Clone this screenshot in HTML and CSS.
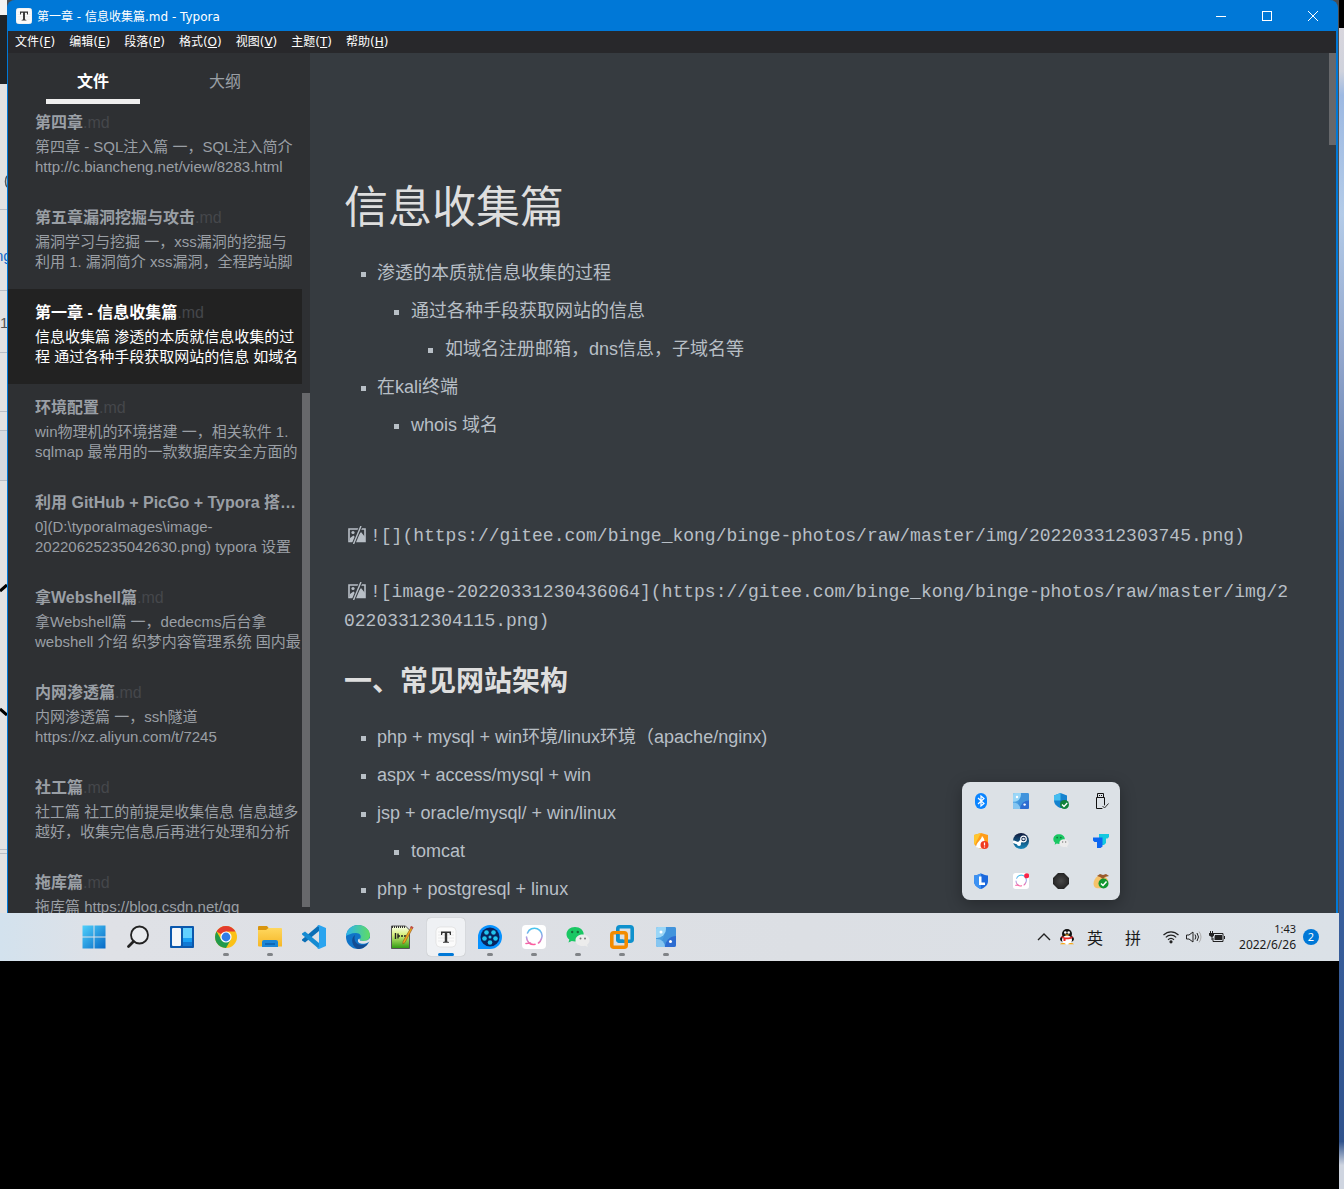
FILE: index.html
```html
<!DOCTYPE html>
<html lang="zh-CN">
<head>
<meta charset="utf-8">
<title>第一章 - 信息收集篇.md - Typora</title>
<link rel="stylesheet" href="styles.css">
</head>
<body>
<svg class="sprite" aria-hidden="true">
  <defs>
    <linearGradient id="win" x1="0" y1="0" x2="1" y2="1"><stop offset="0" stop-color="#4fd0fb"/><stop offset="1" stop-color="#0669c6"/></linearGradient>
    <linearGradient id="arc" x1="0" y1="0" x2="0" y2="1"><stop offset="0" stop-color="#45c5ee"/><stop offset=".55" stop-color="#a9a4e6"/><stop offset="1" stop-color="#ff5c9d"/></linearGradient>
    <linearGradient id="edge" x1="0" y1="0" x2="1" y2="0"><stop offset="0" stop-color="#2db3ee"/><stop offset="1" stop-color="#5fdc62"/></linearGradient>
    <linearGradient id="folder" x1="0" y1="0" x2="0" y2="1"><stop offset="0" stop-color="#ffd75e"/><stop offset="1" stop-color="#f5b727"/></linearGradient>
    <linearGradient id="green" x1="0" y1="0" x2="0" y2="1"><stop offset="0" stop-color="#fbfff0"/><stop offset=".4" stop-color="#d6f07a"/><stop offset="1" stop-color="#2c9a10"/></linearGradient>
    <linearGradient id="steam" x1="0" y1="0" x2="0" y2="1"><stop offset="0" stop-color="#10183a"/><stop offset="1" stop-color="#1689bd"/></linearGradient>
    <radialGradient id="dark"><stop offset="0" stop-color="#484848"/><stop offset="1" stop-color="#252525"/></radialGradient>
    <clipPath id="tile"><rect width="20" height="20" rx="2"/></clipPath>
  </defs>
  <symbol id="wechat" viewBox="0 0 24 24">
    <path d="M9 2C4 2 .5 5.2.5 9.200c0 2.200 1 4 2.800 5.300L2.500 17.500l3.200-1.600c1 .3 2.200.5 3.300.5 5 0 8.700-3.200 8.700-7.200S14 2 9 2z" fill="#19c763"/>
    <circle cx="6.200" cy="7" r="1.200" fill="#146c38"/><circle cx="11.800" cy="7" r="1.200" fill="#146c38"/>
    <path d="M16.500 9.500c-4 0-7 2.500-7 5.800s3 5.800 7 5.800c.9 0 1.800-.1 2.600-.4l2.700 1.300-.7-2.400c1.500-1.100 2.400-2.600 2.400-4.300 0-3.300-3-5.800-7-5.800z" fill="#ececec"/>
    <circle cx="14.500" cy="13.500" r="1" fill="#777"/><circle cx="19" cy="13.500" r="1" fill="#777"/>
  </symbol>
  <symbol id="swirl" viewBox="0 0 24 24">
    <rect width="24" height="24" rx="4" fill="#fff"/>
    <path d="M5.500 8A7.500 7.500 0 0 1 19.500 13.500Q18.500 16.500 16.500 18M4.500 12Q4.500 15 7 18Q10 20 13 19.200M4 18.500l4.500-.5" fill="none" stroke="url(#arc)" stroke-width="1.600" stroke-linecap="round"/>
  </symbol>
  <symbol id="gallery" viewBox="0 0 20 20">
    <g clip-path="url(#tile)">
      <rect width="20" height="20" fill="#4a9fe0"/>
      <path d="M10 0h10v9C14 9 10 12 9 20H5C5 12 10 9 10 0z" fill="#4294dc"/>
      <circle cx="1" cy="2" r="9" fill="#9ad6f7"/>
      <circle cx="1" cy="20" r="8" fill="#86c6f1"/>
      <circle cx="20" cy="20" r="11" fill="#2d6cd1"/>
      <circle cx="5" cy="5" r="1.500" fill="#fff"/><circle cx="14.500" cy="14.500" r="1.500" fill="#fff"/>
    </g>
  </symbol>
  <symbol id="typora" viewBox="0 0 24 24">
    <rect x="2" y="2" width="20" height="20" rx="4" fill="#fbfbfb" stroke="#d8d8d8" stroke-width=".6"/>
    <path d="M4 7h16M4 10h16M4 13h16M4 16h16" stroke="#e2e2e2" stroke-width=".7"/>
    <path d="M7 6.500h10v3.500h-1l-.6-2H13.200v8.500l1.800.4v.8H9v-.8l1.800-.4V8H8.600L8 10H7z" fill="#333"/>
  </symbol>
  <symbol id="broken" viewBox="0 0 18 18">
    <path d="M1 3h16v12.500H1z" fill="none" stroke="#b8bfc6" stroke-width="1.600"/>
    <circle cx="5" cy="6.500" r="1.600" fill="#b8bfc6"/>
    <path d="M2 15v-3l3.500-2.500L8 12l5-6 4 5v4z" fill="#b8bfc6"/>
    <path d="M13 0 5.500 18" stroke="#363b40" stroke-width="3.400"/>
    <path d="M13 0 5.500 18" stroke="#b8bfc6" stroke-width="1.400"/>
  </symbol>
</svg>

<div class="desktop">
  <div class="workspace">
    <svg class="page-behind" width="7" height="913" aria-hidden="true">
      <rect width="7" height="913" fill="#e2e2e3"/><rect width="7" height="15" fill="#f2f2f2"/><rect y="15" width="7" height="69" fill="#1f2327"/>
      <path d="M0 209.500h7M0 290.500h7M0 352.500h7M0 411.500h7M0 430.500h7M0 480.500h7M0 849.500h7M0 853.500h7" stroke="#b9bec6"/>
      <rect y="431" width="7" height="49" fill="#d7dae0"/>
      <path d="M0 591 7 585M0 709l7 6" stroke="#000" stroke-width="3"/>
      <path d="M7 176c-2 3-2 8 0 11" fill="none" stroke="#555" stroke-width="1.500"/>
      <text x="-5" y="261" class="behind-link">ng</text><text x="0" y="328" class="behind-num">1</text>
    </svg>

    <section class="window">
      <header class="titlebar">
        <svg class="app-icon" viewBox="2 2 20 20"><use href="#typora" width="24" height="24"/></svg>
        <span class="title">第一章 - 信息收集篇.md - Typora</span>
        <button class="caption" aria-label="最小化"><svg viewBox="0 0 10 10"><path d="M0 5.500h10"/></svg></button>
        <button class="caption" aria-label="最大化"><svg viewBox="0 0 10 10"><rect x=".5" y=".5" width="9" height="9"/></svg></button>
        <button class="caption" aria-label="关闭"><svg viewBox="0 0 10 10"><path d="M0 0l10 10M10 0 0 10"/></svg></button>
      </header>
      <nav class="menubar">
        <button>文件(<u>F</u>)</button><button>编辑(<u>E</u>)</button><button>段落(<u>P</u>)</button><button>格式(<u>O</u>)</button><button>视图(<u>V</u>)</button><button>主题(<u>T</u>)</button><button>帮助(<u>H</u>)</button>
      </nav>
      <div class="body">
        <aside class="sidebar">
          <div class="tabs"><button class="tab tab-on">文件</button><button class="tab">大纲</button></div>
          <ul class="files">
            <li><a class="file" href="#"><strong>第四章<span>.md</span></strong>第四章 - SQL注入篇 一，SQL注入简介<br>http://c.biancheng.net/view/8283.html</a></li>
            <li><a class="file" href="#"><strong>第五章漏洞挖掘与攻击<span>.md</span></strong>漏洞学习与挖掘 一，xss漏洞的挖掘与<br>利用 1. 漏洞简介 xss漏洞，全程跨站脚</a></li>
            <li><a class="file file-on" href="#"><strong>第一章 - 信息收集篇<span>.md</span></strong>信息收集篇 渗透的本质就信息收集的过<br>程 通过各种手段获取网站的信息 如域名</a></li>
            <li><a class="file" href="#"><strong>环境配置<span>.md</span></strong>win物理机的环境搭建 一，相关软件 1.<br>sqlmap 最常用的一款数据库安全方面的</a></li>
            <li><a class="file" href="#"><strong>利用 GitHub + PicGo + Typora 搭…</strong>0](D:\typoraImages\image-<br>20220625235042630.png) typora 设置</a></li>
            <li><a class="file" href="#"><strong>拿Webshell篇<span>.md</span></strong>拿Webshell篇 一，dedecms后台拿<br>webshell 介绍 织梦内容管理系统 国内最</a></li>
            <li><a class="file" href="#"><strong>内网渗透篇<span>.md</span></strong>内网渗透篇 一，ssh隧道<br>https://xz.aliyun.com/t/7245</a></li>
            <li><a class="file" href="#"><strong>社工篇<span>.md</span></strong>社工篇 社工的前提是收集信息 信息越多<br>越好，收集完信息后再进行处理和分析</a></li>
            <li><a class="file" href="#"><strong>拖库篇<span>.md</span></strong>拖库篇 https://blog.csdn.net/qq</a></li>
          </ul>
          <div class="side-scroll"></div>
        </aside>
        <main class="editor">
          <h1>信息收集篇</h1>
          <ul class="notes">
            <li>渗透的本质就信息收集的过程
              <ul><li>通过各种手段获取网站的信息
                <ul><li>如域名注册邮箱，dns信息，子域名等</li></ul></li></ul></li>
            <li>在kali终端
              <ul><li>whois 域名</li></ul></li>
          </ul>
          <div class="sources">
            <p><svg class="broken"><use href="#broken"/></svg>![](https://gitee.com/binge_kong/binge-photos/raw/master/img/202203312303745.png)</p>
            <p><svg class="broken"><use href="#broken"/></svg>![image-20220331230436064](https://gitee.com/binge_kong/binge-photos/raw/master/img/202203312304115.png)</p>
          </div>
          <h2>一、常见网站架构</h2>
          <ul class="notes">
            <li>php + mysql + win环境/linux环境（apache/nginx)</li>
            <li>aspx + access/mysql + win</li>
            <li>jsp + oracle/mysql/ + win/linux
              <ul><li>tomcat</li></ul></li>
            <li>php + postgresql + linux</li>
          </ul>
          <div class="editor-scroll"></div>
        </main>
      </div>
    </section>

    <div class="tray-popup">
      <svg viewBox="0 0 16 16"><rect x="2" width="12" height="16" rx="6" fill="#0a84ff"/><path d="M5 5l6 5.500-3 2.500V3l3 2.500L5 11" fill="none" stroke="#fff" stroke-width="1.200"/></svg>
      <svg viewBox="0 0 20 20"><use href="#gallery"/></svg>
      <svg viewBox="0 0 16 16"><path d="M7.500 0 14 2.500V7c0 4-2.500 6.500-6.500 8C3.500 13.500 1 11 1 7V2.500z" fill="#1583cf"/><path d="M7.500 0v7.500H1v-5z" fill="#45bdf0"/><path d="M7.500 7.500H14C13.500 11.500 11 14 7.500 15z" fill="#0d5ca8"/><circle cx="11.500" cy="11.500" r="4.500" fill="#12823b"/><path d="M9 11.500l2 2 3.200-3.500" fill="none" stroke="#fff" stroke-width="1.300"/></svg>
      <svg viewBox="0 0 16 16"><path d="M4.500.5h6v4h-6zM3.500 4.500h8v11h-8zM6 2.500h1M8 2.500h1" fill="none" stroke="#111"/><path d="M9 13l2 2 4.500-5" fill="none" stroke="#dce1e6" stroke-width="3"/><path d="M9.500 13l2 2 4-4.500" fill="none" stroke="#333"/></svg>
      <svg viewBox="0 0 16 16"><path d="M1 2l7-2 7 2v7c0 3-3 5-7 7-4-1.500-7-4-7-7z" fill="#ff9c18"/><path d="M1 2l7-2C6 4 4 7 2 12 1 11 1 9 1 9z" fill="#ffc62f"/><path d="M3 14c1-6 5-6 6-11 3 3 3 6 2 12-3 1-6 0-8-1z" fill="#fff"/><circle cx="11.500" cy="12" r="4" fill="#f03b20"/><path d="M11.500 9.500v3M11.500 13.500v1" stroke="#fff" stroke-width="1.200"/></svg>
      <svg viewBox="0 0 16 16"><circle cx="8" cy="8" r="8" fill="url(#steam)"/><path d="M0 8.500l5.500 2 3-3" stroke="#fff" stroke-width="2.600" fill="none"/><circle cx="10.500" cy="6" r="2.800" fill="#17294d" stroke="#fff" stroke-width="1.200"/><circle cx="10.500" cy="6" r="1.300" fill="#d8e4ef"/><circle cx="6" cy="11" r="2" fill="#fff"/></svg>
      <svg viewBox="0 0 24 24"><use href="#wechat"/></svg>
      <svg viewBox="0 0 16 16"><path d="M6 1h10v3l-1.500 1.500H13V10l-2 2H9V5H6z" fill="#14c8df"/><path d="M0 4.500h9.500v9L7.500 15H4V9H1.500L0 7.500z" fill="#0c66f1"/></svg>
      <svg viewBox="0 0 16 16"><path d="M1 2.500C4 2.500 6 1 8 .5c2 .5 4 2 7 2V8c0 4-3 6.500-7 8-4-1.500-7-4-7-8z" fill="#1c69dd"/><path d="M1 2.500C4 2.500 6 1 8 .5V16c-4-1.500-7-4-7-8z" fill="#3d92f2"/><path d="M6 3.500h2.500v6H12V12H6z" fill="#fff"/></svg>
      <svg viewBox="0 0 24 24"><use href="#swirl"/><circle cx="20.500" cy="4" r="3.800" fill="#fb2448"/></svg>
      <svg viewBox="0 0 16 16"><path d="M5 0h6l5 5v6l-5 5H5l-5-5V5z" fill="url(#dark)"/></svg>
      <svg viewBox="0 0 16 16"><path d="M5 3C0 6-1 13 3 15c4 1 10 0 12-4 1-4-1-6-4-8z" fill="#f6c36a"/><path d="M4 3l3-2 3 1 3-1 3 2-4 1-2 2-3-2z" fill="#9b5a2b"/><circle cx="10.500" cy="10.500" r="5" fill="#11962f"/><path d="M8 10.500l2 2 3.500-4" fill="none" stroke="#fff" stroke-width="1.500"/></svg>
    </div>
  </div>

  <footer class="taskbar">
    <div class="apps">
      <button aria-label="开始"><svg viewBox="0 0 24 24"><path fill="url(#win)" d="M.5.500h11v11H.5zM12.500.500h11v11h-11zM.5 12.500h11v11H.5zM12.500 12.500h11v11h-11z"/></svg></button>
      <button aria-label="搜索"><svg viewBox="0 0 24 24"><circle cx="13.500" cy="10" r="8.500" fill="#e9ebee" stroke="#222" stroke-width="1.800"/><path d="M7.500 16.500 2.500 21.500" stroke="#222" stroke-width="2.800" stroke-linecap="round"/></svg></button>
      <button aria-label="小组件"><svg viewBox="0 0 24 24"><rect y="1" width="24" height="22" rx="1" fill="#0b58ad"/><rect x="2" y="3" width="9" height="18" rx="1" fill="#f5f7f9"/><path d="M13 3h9v10h-9z" fill="#62d0ff"/><path d="M13 13h9v4h-9z" fill="#18a0f5"/><path d="M13 17h9v4h-9z" fill="#0f78d4"/></svg></button>
      <button class="running" aria-label="Chrome"><svg viewBox="0 0 24 24"><circle cx="12" cy="12" r="11" fill="#fbc116"/><path d="M12 12 2.500 6.500A11 11 0 0 1 21.500 6.500H12z" fill="#e33b2e"/><path d="M2.500 6.500A11 11 0 0 0 12 23l4.800-8.500L12 12l-4.800 2.500z" fill="#219a4c"/><circle cx="12" cy="12" r="5.600" fill="#fff"/><circle cx="12" cy="12" r="4.400" fill="#2f7de9"/></svg></button>
      <button class="running" aria-label="文件资源管理器"><svg viewBox="0 0 24 24"><path d="M0 2a1 1 0 0 1 1-1h8l2 2.500L9 6H0z" fill="#d9950d"/><path d="M0 5h8l2.500-2H23a1 1 0 0 1 1 1v17.500H1a1 1 0 0 1-1-1z" fill="url(#folder)"/><path d="M4 22v-5a2 2 0 0 1 2-2h12a2 2 0 0 1 2 2v5z" fill="#1a86d6"/><path d="M7 19h10" stroke="#0b5cad" stroke-width="1.500"/></svg></button>
      <button aria-label="Visual Studio Code"><svg viewBox="0 0 24 24"><path d="M17 0v6L3 17.500 0 15.500v-1z" fill="#0b6eb5"/><path d="M17 24v-6L3 6.500 0 8.500v1z" fill="#158bd2"/><path d="M17 0l7 3v18l-7 3-2-1 2-1V2l-2-1z" fill="#2aa4ef"/></svg></button>
      <button aria-label="Edge"><svg viewBox="0 0 24 24"><circle cx="12" cy="12" r="12" fill="#1074c8"/><path d="M0 11C1 4 6 0 12 0c7 0 12 5 12 10 0 4-3 6-6 6-3.500 0-4.500-1-4-2 2-3 0-6-4-6-5 0-8 2-10 3z" fill="url(#edge)"/><path d="M9 10c-2 6 2 10 7 10 3 0 5-1 6.500-2.500C20 22 16 24 12 24 6 22 4 13 9 10z" fill="#134c92"/><path d="M14 14c-1 1 0 2 4 2 2.500 0 4.500-1 6-3v3l-2 1.500c-4 2.500-11 1.500-10-2.500.5-1 1-1.500 2-1z" fill="#dfe3e7"/></svg></button>
      <button aria-label="Notepad++"><svg viewBox="0 0 24 24"><path d="M1.500 1h14l4 4v18.500h-18z" fill="url(#green)" stroke="#555"/><path d="M2 2h13" stroke="#333" stroke-width="2" stroke-dasharray="1 1"/><path d="M5.500 8v6M8 8.500v5M8 11h2M11 11h2M14 11h2" stroke="#222" stroke-width="1.400"/><path d="M21.500 1.500l1.500 1L15 17.500l-2.200 1.500.3-2.700z" fill="#f0a51d" stroke="#8b571b" stroke-width=".6"/><path d="M21 1l2.500 1.500-1 1.500L20 2.500z" fill="#c44d4a"/></svg></button>
      <button class="running current" aria-label="Typora"><svg viewBox="0 0 24 24"><use href="#typora"/></svg></button>
      <button class="running" aria-label="影音"><svg viewBox="0 0 24 24"><path d="M0 24V12a12 12 0 1 1 12 12z" fill="#0792ff"/><circle cx="12" cy="12" r="9.500" fill="#07245e"/><g fill="#22c5ed"><circle cx="12" cy="12" r="1.500"/><circle cx="8.500" cy="7.500" r="2.300"/><circle cx="15.500" cy="7.500" r="2.300"/><circle cx="6.500" cy="13.500" r="2.300"/><circle cx="17.500" cy="13.500" r="2.300"/><circle cx="12" cy="17.500" r="2.300"/></g></svg></button>
      <button class="running" aria-label="同步"><svg viewBox="0 0 24 24"><use href="#swirl"/></svg></button>
      <button class="running" aria-label="微信"><svg viewBox="0 0 24 24"><use href="#wechat"/></svg></button>
      <button class="running" aria-label="VMware"><svg viewBox="0 0 24 24" fill="none" stroke-width="3.600"><rect x="7.800" y="1.800" width="14.400" height="14.400" rx="2" stroke="#0f91cd"/><rect x="1.800" y="7.800" width="14.400" height="14.400" rx="2" stroke="#f38b00"/><path d="M7.800 9v5.200a2 2 0 0 0 2 2H13" stroke="#0f91cd"/></svg></button>
      <button class="running" aria-label="图库"><svg viewBox="-2 -2 24 24"><use href="#gallery" width="20" height="20"/></svg></button>
    </div>
    <div class="tray">
      <button aria-label="显示隐藏的图标"><svg viewBox="0 0 16 16"><path d="M2 11l6-6 6 6" fill="none" stroke="#222" stroke-width="1.400"/></svg></button>
      <button aria-label="QQ"><svg viewBox="0 0 16 16"><ellipse cx="8" cy="10" rx="7" ry="4" fill="#111"/><ellipse cx="8" cy="5" rx="5" ry="5" fill="#111"/><ellipse cx="8" cy="11" rx="5" ry="4.500" fill="#fff"/><circle cx="6.300" cy="3.500" r="1.300" fill="#fff"/><circle cx="9.700" cy="3.500" r="1.300" fill="#fff"/><path d="M5.500 5.500h5L8 7z" fill="#f8a916"/><path d="M2.500 7c3 2 8 2 11 0v2c-3 1.500-5 1.500-7 1.200V12H4.500V9.500l-2-1z" fill="#e72525"/><path d="M1 15.200c1-1.500 5-1.500 6 0zM9 15.200c1-1.500 5-1.500 6 0z" fill="#f8a916"/></svg></button>
      <button class="ime">英</button>
      <button class="ime ime-mode">拼</button>
      <button class="status" aria-label="网络"><svg viewBox="0 0 16 16" fill="none" stroke="#222" stroke-width="1.200"><path d="M.5 6c4.500-4.300 10.500-4.300 15 0M2.800 8.300c3-3 7.400-3 10.400 0M5 10.700c2-1.800 4-1.800 6 0"/><circle cx="8" cy="12.800" r="1" fill="#222"/></svg></button>
      <button aria-label="音量"><svg viewBox="0 0 16 16" fill="none" stroke="#222"><path d="M.5 6v4H3l4 3V3L3 6zM9 5.500q1.800 2.500 0 5M11 4q3 4 0 8"/><path d="M13 2.500q4 5.500 0 11" stroke="#aaa"/></svg></button>
      <button aria-label="电池"><svg viewBox="0 0 16 16"><path d="M5 4.500h9v8H4V9" fill="none" stroke="#222"/><path d="M6 6h7v5H5.500V8zM15 7h1v3h-1zM1 2h1v2h1V2h1v2h1v2.500L3.500 8v3h-1V8L0 6.500V4h1z" fill="#222"/></svg></button>
      <button class="clock"><span>1:43</span><span class="date">2022/6/26</span></button>
      <button class="badge" aria-label="2 条通知">2</button>
    </div>
  </footer>
  <div class="next-screen"></div>
</div>
</body>
</html>
```
FILE: styles.css
```css
* { box-sizing: border-box; }
body {
  margin: 0;
  min-height: 100vh;
  background: #000;
  font-family: "Liberation Sans", "Noto Sans CJK SC", sans-serif;
}
button { border: 0; padding: 0; margin: 0; background: none; color: inherit; font: inherit; }
ul { list-style: none; margin: 0; padding: 0; }
.sprite { position: absolute; width: 0; height: 0; }

.desktop {
  display: grid;
  grid-template-columns: minmax(0, 1fr) 5px;
  grid-template-rows: auto auto 1fr;
  min-height: 100vh;
}
.next-screen {
  grid-column: 2;
  grid-row: 1 / 4;
  background: linear-gradient(#000 0 28px, #d8d6dd 28px, #cfd2dc 6%, #9db9e2 8%, #b3cbe8 18%, #92a6cc 30%, #4f70a6 45%, #395f9d 75%, #2f528c 96%, #cfd5e0 98%);
}
.workspace { position: relative; display: flex; background: #4c4d50; }
.page-behind { flex: none; }
.behind-link { font-size: 15px; fill: #1668c9; }
.behind-num { font-size: 15px; fill: #555; }

/* application window */
.window {
  flex: 1;
  min-width: 0;
  display: flex;
  flex-direction: column;
  margin-right: 1px;
  border: solid #0078d7;
  border-width: 0 2px 0 1px;
  border-radius: 8px 8px 0 0;
  background: #0078d7;
}
.titlebar {
  display: flex;
  align-items: center;
  height: 31px;
  padding-left: 8px;
  color: #fff;
  font: 12px "DejaVu Sans", "Noto Sans CJK SC", sans-serif;
}
.app-icon { width: 16px; height: 16px; }
.title { flex: 1; padding-left: 5px; }
.caption { width: 46px; height: 31px; display: grid; place-items: center; }
.caption svg { width: 10px; height: 10px; overflow: visible; fill: none; stroke: #fff; }
.menubar {
  display: flex;
  height: 22px;
  background: #28282b;
  color: #fff;
  font: 12px/22px "DejaVu Sans", "Noto Sans CJK SC", sans-serif;
}
.menubar button { padding: 0 7px; }
.body { flex: 1; display: flex; background: #363b40; }

/* file list */
.sidebar {
  position: relative;
  flex: none;
  width: 302px;
  height: 0;
  min-height: 100%;
  overflow: hidden;
  background: #2e3033;
  color: #9a9fa5;
}
.tabs { display: flex; padding: 0 19px; }
.tab { position: relative; width: 132px; height: 51px; padding-bottom: 3px; padding-top: 10px; font-size: 16px; line-height: 38px; }
.tab-on { color: #fff; font-weight: bold; }
.tab-on::after { content: ""; position: absolute; left: 19px; right: 19px; bottom: 0; height: 5px; background: #eee; }
.files { margin-right: 8px; }
.file {
  display: block;
  height: 95px;
  padding: 14px 0 0 27px;
  overflow: hidden;
  color: inherit;
  font-size: 15px;
  line-height: 20px;
  text-decoration: none;
  white-space: nowrap;
}
.files li:first-child .file { height: 90px; padding-top: 9px; }
.file strong { display: block; margin-bottom: 4px; font-size: 16px; overflow: hidden; text-overflow: ellipsis; }
.file strong span { color: #45474b; font-weight: normal; }
.file-on { background: #222; color: #fff; }
.side-scroll { position: absolute; top: 340px; right: 0; bottom: 6px; width: 8px; background: #67686b; }

/* document */
.editor {
  position: relative;
  flex: 1;
  min-width: 0;
  padding: 127px 44px 10px 34px;
  color: #b8bfc6;
  font-size: 18px;
  line-height: 28px;
}
.editor h1, .editor h2 { margin: 0; color: #dedede; }
.editor h1 { margin-bottom: 23px; font-size: 44px; line-height: 56px; font-weight: normal; }
.editor h2 { margin: 26px 0 21px; font-size: 28px; line-height: 40px; }
.notes li { position: relative; padding-left: 33px; }
.notes li li { padding-left: 34px; }
.notes li::before { content: ""; position: absolute; left: 17px; top: 13px; width: 5px; height: 5px; background: #b8bfc6; }
.notes li + li, .notes ul { margin-top: 10px; }
.sources {
  display: grid;
  gap: 27px;
  margin-top: 83px;
  font-family: "Liberation Mono", monospace;
  line-height: 29px;
  word-break: break-all;
}
.sources p { margin: 0; }
.broken { width: 18px; height: 18px; margin: 0 4px; vertical-align: -3px; }
.editor-scroll { position: absolute; top: 0; right: 0; width: 7px; height: 92px; background: #67686b; }

/* hidden icons flyout */
.tray-popup {
  position: absolute;
  right: 219px;
  bottom: 13px;
  display: grid;
  grid-template-columns: repeat(4, 16px);
  gap: 24px;
  padding: 11px;
  border-radius: 8px;
  background: #dce1e6;
  box-shadow: 0 4px 16px rgba(0, 0, 0, .3);
}
.tray-popup svg { display: block; width: 16px; height: 16px; }

/* taskbar */
.taskbar {
  position: relative;
  display: flex;
  align-items: center;
  justify-content: space-between;
  height: 48px;
  padding: 0 20px 0 75px;
  background: linear-gradient(90deg, #d3e2ee, #dfe1e6 8%, #dcdfe4 60%, #dbe1e7);
  color: #1b1b1b;
}
.apps { display: flex; gap: 6px; }
.apps button { position: relative; display: grid; place-items: center; width: 38px; height: 38px; border-radius: 4px; }
.apps svg { width: 24px; height: 24px; }
.running::after { content: ""; position: absolute; bottom: 0; left: 16px; width: 6px; height: 3px; border-radius: 2px; background: #808387; }
.current { background: #eff1f4; box-shadow: 0 0 1px #999; }
.current::after { left: 11px; width: 16px; background: #0078d7; }
.tray { display: flex; align-items: center; gap: 7px; }
.tray svg { display: block; width: 16px; height: 16px; }
.ime { margin-left: 5px; font-size: 16px; }
.ime-mode, .status { margin-left: 15px; }
.clock { display: grid; margin-left: 7px; text-align: right; font: 11px/16px "Noto Sans", sans-serif; }
.date { font-size: 12px; }
.badge { width: 16px; height: 16px; border-radius: 8px; background: #0078d7; color: #fff; font: 11px/16px "Noto Sans", sans-serif; text-align: center; }
```
